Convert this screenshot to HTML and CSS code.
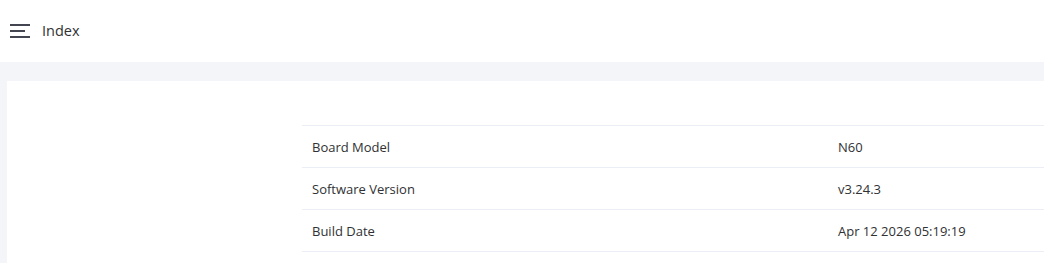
FILE: index.html
```html
<!DOCTYPE html>
<html lang="en">
<head>
    <meta charset="UTF-8">
    <meta name="viewport" content="width=device-width, initial-scale=1.0">
    <title>Index</title>
    <link rel="stylesheet" href="styles.css">
</head>
<body>
    <header class="topbar">
        <span class="menu-icon">
            <svg width="20" height="14" viewBox="0 0 20 14">
                <rect x="0" y="0" width="20" height="2" fill="#434650"/>
                <rect x="0" y="6" width="15" height="2" fill="#434650"/>
                <rect x="0" y="12" width="20" height="2" fill="#434650"/>
            </svg>
        </span>
        <span class="page-title">Index</span>
    </header>
    <main class="main">
        <div class="card">
            <table class="info-table">
                <tr>
                    <td class="label">Board Model</td>
                    <td class="value">N60</td>
                </tr>
                <tr>
                    <td class="label">Software Version</td>
                    <td class="value">v3.24.3</td>
                </tr>
                <tr>
                    <td class="label">Build Date</td>
                    <td class="value">Apr 12 2026 05:19:19</td>
                </tr>
            </table>
        </div>
    </main>
</body>
</html>
```

FILE: styles.css
```css
body {
    margin: 0;
    font-family: "Open Sans", "Noto Sans", sans-serif;
    color: #333333;
    background-color: #f4f5f9;
    height: 100vh;
    overflow: hidden;
}
.topbar {
    background-color: #ffffff;
    height: 62px;
    display: flex;
    align-items: center;
    padding-left: 10px;
}
.menu-icon {
    display: flex;
    width: 20px;
    height: 14px;
}
.page-title {
    margin-left: 12px;
    margin-bottom: 2px;
    font-size: 14.5px;
    color: #303133;
}
.main {
    padding: 19px 0 0 7px;
}
.card {
    box-sizing: border-box;
    background-color: #ffffff;
    height: calc(100vh - 81px);
    padding: 44px 0 0 295px;
}
.info-table {
    width: 760px;
    border-collapse: collapse;
    font-size: 13px;
    color: #303133;
}
.info-table td {
    border-top: 1px solid #ebeef5;
    border-bottom: 1px solid #ebeef5;
    height: 41px;
    padding: 0 10px;
}
.info-table .label {
    width: 506px;
}
```
